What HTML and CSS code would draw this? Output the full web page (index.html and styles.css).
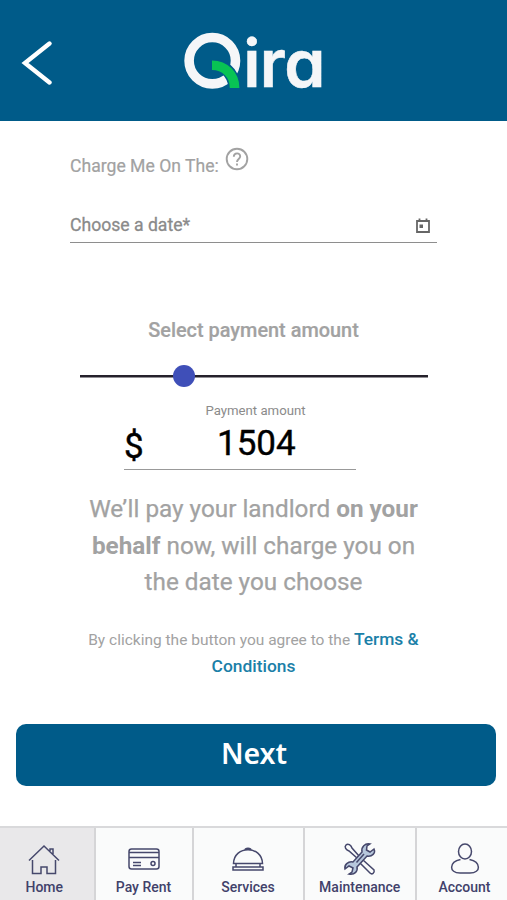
FILE: index.html
```html
<!DOCTYPE html>
<html lang="en">
<head>
<meta charset="utf-8">
<title>Qira</title>
<link rel="stylesheet" href="styles.css">
</head>
<body>
<div class="app">
  <header class="header">
    <svg class="back" viewBox="0 0 32 46" aria-hidden="true"><path d="M28.5 2.5 4 22 28.5 41.5"/></svg>
    <svg class="logo" viewBox="0 0 144 64" role="img" aria-label="Qira">
      <circle class="ring" cx="30.3" cy="32.7" r="23.2"/>
      <path class="gap" d="M33 37.2C45 38 53 48 53 64"/>
      <path class="tail" d="M30 37.2C43 37.2 52.6 47 52.6 60"/>
      <text class="wordmark" x="61.3 77.8 102.3" y="59.3">ira</text>
    </svg>
  </header>
  <main class="main">
    <div class="charge"><span>Charge Me On The:</span>
      <svg class="help" viewBox="0 0 24 24"><circle cx="12" cy="12" r="10.3"/><path d="M8.8 9.8C8.8 5.2 15.3 5.3 15.2 9.5 15.1 12 12 12 12 15M12 16.6V18.6"/></svg>
    </div>
    <div class="date"><span>Choose a date*</span>
      <svg class="calendar" viewBox="0 0 14 15"><path d="M1 3H13V14H1ZM1 3.2H13M3.5 0.500V3M10.500 0.500V3"/><rect x="3.5" y="6.5" width="3.5" height="3.5"/></svg>
    </div>
    <h2 class="title">Select payment amount</h2>
    <div class="slider"><div class="thumb"></div></div>
    <div class="caption">Payment amount</div>
    <div class="amount"><span class="dollar">$</span><span class="value">1504</span></div>
    <p class="info">We’ll pay your landlord <b>on your</b><br><b>behalf</b> now, will charge you on<br>the date you choose</p>
    <p class="terms">By clicking the button you agree to the <a>Terms &amp;<br>Conditions</a></p>
    <button class="next">Next</button>
  </main>
  <nav class="nav">
    <div class="tab active"><svg viewBox="0 0 34 34"><path d="M2 18.500 17 4 32 18.500M5.5 18V31.500H14V25H20V31.500H28.5V18M23 9V7H26V12"/></svg><span>Home</span></div>
    <div class="tab"><svg viewBox="0 0 34 34"><rect x="2" y="7" width="30" height="20" rx="2.5"/><path d="M2 10.5H32M2 15.5H32M6 20.5H14M6 23.5H14"/><circle cx="26" cy="21.5" r="2"/></svg><span>Pay Rent</span></div>
    <div class="tab"><svg viewBox="0 0 34 34"><path d="M2.5 21.5C3 3 31 3 31.500 21.500ZM14 8C14 5.500 20 5.500 20 8M5 21.500V25M29 21.500V25M2 25H32V28H2Z"/></svg><span>Services</span></div>
    <div class="tab"><svg viewBox="0 0 34 34"><path d="M3 3C5 1 8 3 9 6L16 14 14 16 6 9C3 8 1 5 3 3ZM20 18 31 28C32 31 29 33 27 31L17 21Z"/><path class="wrench" d="M31 7 27 10 23.500 8 24 4 27 2C22 1 18 5 19 10L10 20C5 19 1 23 2 27L6 24 10 26 9 30 6 32C12 33 15 29 14 25L24 14C29 15 33 11 31 7Z"/><path d="M13.500 20.500 21 12"/></svg><span>Maintenance</span></div>
    <div class="tab"><svg viewBox="0 0 34 34"><ellipse cx="17" cy="9.500" rx="6.500" ry="7.500"/><path d="M12.500 17.500C1 20 .500 31 12 31H22C33.500 31 33 20 21.500 17.500"/></svg><span>Account</span></div>
  </nav>
</div>
</body>
</html>
```
FILE: styles.css
```css
* { box-sizing: border-box; }
body { margin: 0; background: #fff; font-family: Roboto, sans-serif; color: #a2a2a2; }
.app { width: 507px; height: 900px; display: flex; flex-direction: column; overflow: hidden; }
.header { height: 121px; background: #005b89; display: flex; align-items: flex-start; flex: none; }
.back { width: 32px; height: 46px; margin: 41px 0 0 21px; fill: none; stroke: #fff; stroke-width: 4.4; stroke-linecap: round; stroke-linejoin: miter; }
.logo { width: 144px; height: 64px; margin: 28px 0 0 129px; fill: none; overflow: visible; }
.ring { stroke: #f5f6f8; stroke-width: 9.600; }
.gap { stroke: #005b89; stroke-width: 12.500; }
.tail { stroke: #08c354; stroke-width: 9.600; }
.wordmark { font: 600 66px Inter, sans-serif; font-feature-settings: "cv11"; fill: #f5f6f8; stroke: #f5f6f8; stroke-width: .5; }
.main { flex: 1; display: flex; flex-direction: column; align-items: center; }
.charge { width: 367px; height: 60px; padding-top: 26px; display: flex; gap: 6px; font-size: 17.600px; line-height: 38px; -webkit-text-stroke: .2px; }
.charge span { white-space: nowrap; }
.help { width: 24px; height: 24px; fill: none; stroke: #a2a2a2; stroke-width: 1.900; }
.date { width: 367px; height: 62px; border-bottom: 1px solid #8e8e8e; padding-top: 33px; display: flex; justify-content: space-between; font-size: 17.600px; line-height: 23px; color: #8a8a8a; -webkit-text-stroke: .3px; }
.calendar { width: 14px; height: 15px; margin: 4px 7px 0 0; fill: none; stroke: #666; stroke-width: 1.800; }
.calendar rect { fill: #666; stroke: none; }
.title { margin: 76px 0 0; font-size: 19.900px; line-height: 24px; font-weight: 500; -webkit-text-stroke: .2px; }
.slider { width: 348px; height: 22px; margin: 22px 0 0; background: linear-gradient(#25212b, #25212b) center / 100% 2.500px no-repeat; padding-left: 93px; }
.thumb { width: 22px; height: 22px; border-radius: 50%; background: #3f4fb8; }
.caption { margin: 16px 0 0 4px; font-size: 13.200px; line-height: 16px; color: #8b8b8b; }
.amount { width: 232px; height: 51px; margin-right: 27px; border-bottom: 1px solid #999; color: #000; display: flex; font-size: 35px; line-height: 50px; -webkit-text-stroke: .4px; }
.dollar { width: 93px; padding-top: 3px; }
.info { margin: 21px 0 0; font-size: 24.300px; line-height: 36.500px; text-align: center; white-space: nowrap; -webkit-text-stroke: .25px; }
.info b { font-weight: 700; -webkit-text-stroke: 0; }
.terms { margin: 25px 0 0; font-size: 15.500px; line-height: 26px; text-align: center; white-space: nowrap; }
.terms a { color: #1b80a8; font-size: 17.400px; font-weight: 500; }
.next { width: 480px; height: 62px; margin: 44px 0 0 5px; border: 0; border-radius: 10px; background: #005b89; color: #fff; font: 600 28.500px "Noto Sans", sans-serif; padding: 0 4px 4px 0; }
.nav { height: 74px; flex: none; display: grid; grid-template-columns: 95.500px 98px 111px 112.500px 1fr; border-top: 2px solid #d9d9db; background: #fafbfb; }
.tab { display: flex; flex-direction: column; align-items: center; padding-top: 14px; border-right: 2px solid #d5d5d7; color: #41416a; font-size: 14px; line-height: 18px; font-weight: 500; }
.tab:last-child { border-right: 0; padding-left: 5px; }
.active { background: #e9e8ea; padding-right: 5px; }
.tab svg { width: 34px; height: 34px; margin-bottom: 2px; fill: none; stroke: #46486c; stroke-width: 1.500; }
.tab .wrench { fill: #b7c7dc; }
```
